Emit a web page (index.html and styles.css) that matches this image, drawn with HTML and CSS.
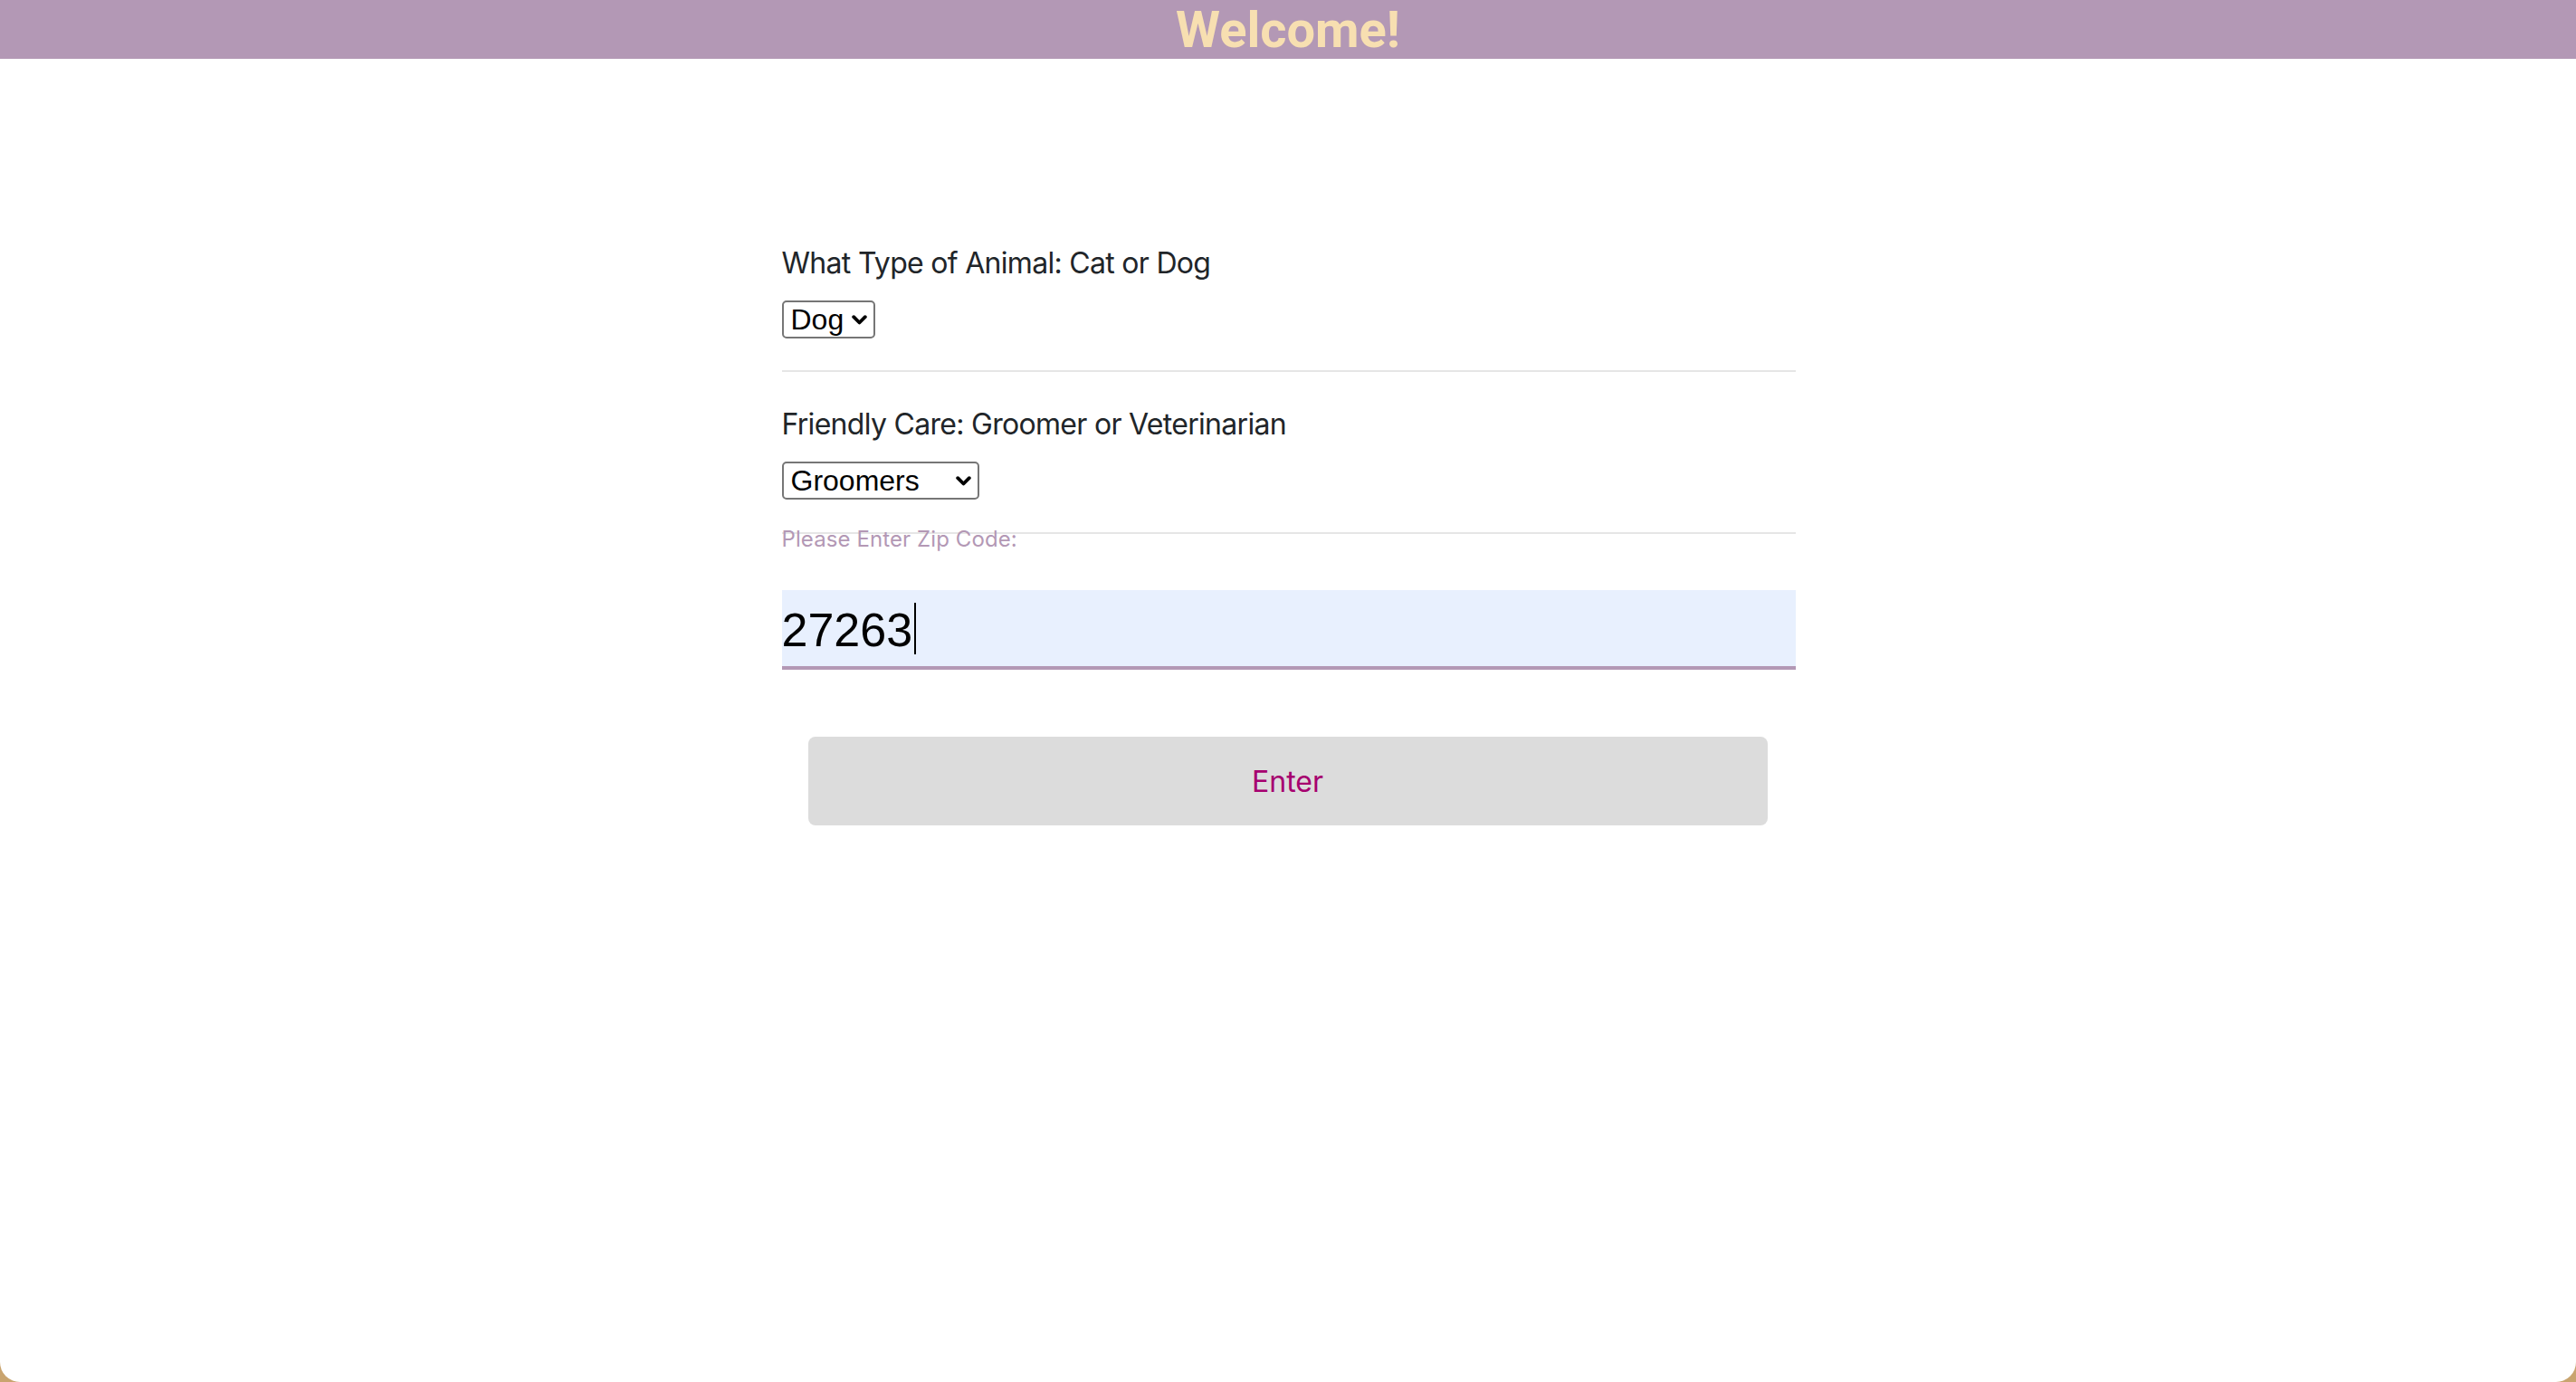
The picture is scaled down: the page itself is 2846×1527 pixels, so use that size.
FILE: index.html
```html
<!DOCTYPE html>
<html lang="en">
<head>
<meta charset="utf-8">
<title>Welcome</title>
<link rel="stylesheet" href="styles.css">
</head>
<body>
<div class="page">
  <header class="topbar">
    <h1 class="title">Welcome!</h1>
  </header>
  <main class="content">
    <form class="form">
      <div class="group">
        <label class="label" for="animal">What Type of Animal: Cat or Dog</label>
        <div class="select-wrap select-sm">
          <select id="animal" class="select">
            <option>Dog</option>
            <option>Cat</option>
          </select>
          <svg class="chev" viewBox="0 0 17 11" width="17" height="11"><polyline points="2.2,2.2 8.5,8.5 14.8,2.2" fill="none" stroke="#000" stroke-width="3.8" stroke-linecap="round" stroke-linejoin="round"/></svg>
        </div>
      </div>
      <hr class="rule">
      <div class="group group-2">
        <label class="label" for="care">Friendly Care: Groomer or Veterinarian</label>
        <div class="select-wrap select-lg">
          <select id="care" class="select">
            <option>Groomers</option>
            <option>Veterinarians</option>
          </select>
          <svg class="chev" viewBox="0 0 17 11" width="17" height="11"><polyline points="2.2,2.2 8.5,8.5 14.8,2.2" fill="none" stroke="#000" stroke-width="3.8" stroke-linecap="round" stroke-linejoin="round"/></svg>
        </div>
      </div>
      <hr class="rule rule-2">
      <label class="zip-label" for="zip">Please Enter Zip Code:</label>
      <div class="zip-field">
        <input id="zip" class="zip-input" type="text" value="27263">
        <span class="caret"></span>
      </div>
      <button type="button" class="enter-btn">Enter</button>
    </form>
  </main>
</div>
</body>
</html>
```

FILE: styles.css
```css
html {
  background: #c9a46f;
  height: 100%;
}

body {
  margin: 0;
  height: 100%;
}

.page {
  min-height: 100%;
  background: #ffffff;
  border-radius: 0 0 22px 22px;
  overflow: hidden;
}

.topbar {
  height: 65px;
  background: #b398b5;
  display: flex;
  align-items: center;
  justify-content: center;
}

.title {
  margin: 0;
  padding-top: 2px;
  font-family: Roboto, "Liberation Sans", Arial, sans-serif;
  font-weight: 700;
  font-size: 56px;
  line-height: 63px;
  color: #f7dfb1;
}

.content {
  display: flex;
  justify-content: center;
}

.form {
  width: 1120px;
  margin-left: 1px;
  display: flex;
  flex-direction: column;
  padding-top: 206px;
}

.group {
  display: flex;
  flex-direction: column;
  align-items: flex-start;
}

.group-2 {
  margin-top: 38px;
}

.label {
  font-family: Inter, "Noto Sans", sans-serif;
  font-size: 32px;
  letter-spacing: -0.7px;
  line-height: 40px;
  color: #212529;
}

.select-wrap {
  position: relative;
  margin-top: 21px;
  height: 42px;
}

.select-sm { width: 103px; }
.select-lg { width: 218px; }

.select {
  appearance: none;
  -webkit-appearance: none;
  width: 100%;
  height: 42px;
  box-sizing: border-box;
  border: 2px solid #767676;
  border-radius: 5px;
  background: #ffffff;
  padding: 0 0 0 8px;
  margin: 0;
  font-family: "Liberation Sans", Arial, sans-serif;
  font-size: 32px;
  color: #000000;
  outline: none;
}

.chev {
  position: absolute;
  right: 9px;
  top: 16px;
  pointer-events: none;
}

.rule {
  width: 100%;
  margin: 35px 0 0 0;
  border: 0;
  border-top: 2px solid #e6e6e6;
  height: 0;
}

.rule-2 {
  margin-top: 36px;
}

.zip-label {
  margin-top: -9px;
  font-family: Inter, "Noto Sans", sans-serif;
  font-size: 24px;
  letter-spacing: 0.1px;
  line-height: 30px;
  color: #b398b5;
}

.zip-field {
  position: relative;
  margin-top: 41px;
}

.zip-input {
  display: block;
  width: 100%;
  height: 88px;
  box-sizing: border-box;
  border: 0;
  border-bottom: 4px solid #b398b5;
  background: #e8f0fe;
  padding: 4px 0 0 0;
  font-family: "Liberation Sans", Arial, sans-serif;
  font-size: 52px;
  color: #000000;
  outline: none;
}

.caret {
  position: absolute;
  left: 146px;
  top: 14px;
  width: 2px;
  height: 57px;
  background: #000000;
  pointer-events: none;
}

.enter-btn {
  margin: 74px 31px 0 29px;
  height: 98px;
  border: 0;
  border-radius: 8px;
  background: #dcdcdc;
  font-family: Inter, "Noto Sans", sans-serif;
  font-size: 32px;
  color: #a6006f;
  cursor: pointer;
}
```
